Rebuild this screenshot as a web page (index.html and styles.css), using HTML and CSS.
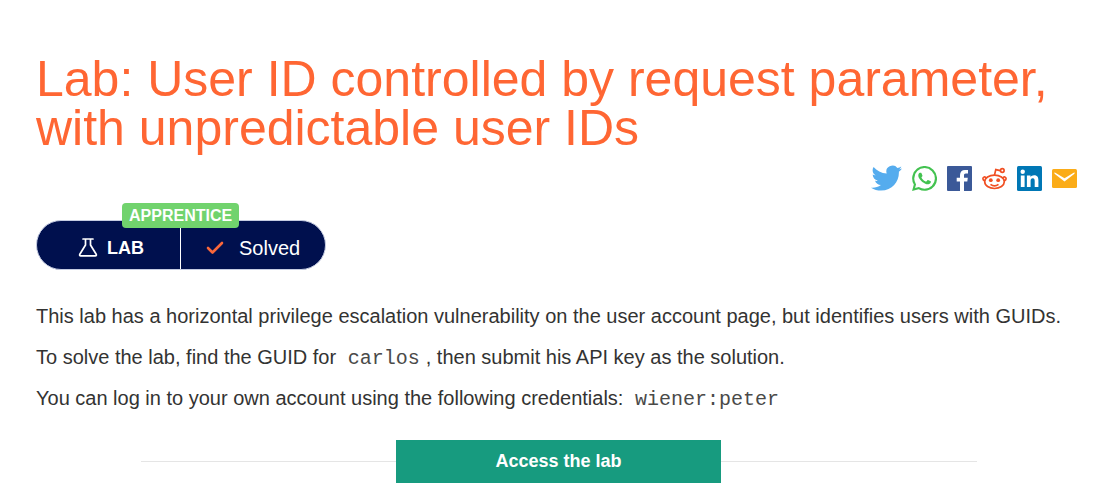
FILE: index.html
```html
<!DOCTYPE html>
<html lang="en">
<head>
<meta charset="utf-8">
<meta name="viewport" content="width=device-width, initial-scale=1">
<title>Lab: User ID controlled by request parameter, with unpredictable user IDs</title>
<link rel="stylesheet" href="styles.css">
</head>
<body>
<main class="page">
  <h1 class="title">Lab: User ID controlled by request parameter, with unpredictable user IDs</h1>
  <nav class="share" aria-label="Share">
    <a class="share-link" href="#twitter" aria-label="Twitter"><svg width="31" height="26" viewBox="0 0 30 26" preserveAspectRatio="none"><path fill="#55acee" d="M30 3.4c-1 .5-1.900.8-3.100 1 1.200-.7 2-1.700 2.400-3-1.100.7-2.400 1.200-3.700 1.500A6 6 0 0 0 15.200 8.500C10 8.200 5.600 5.800 2.500 2 .7 5 1.600 8.600 4.400 10.400c-1 0-2-.3-2.800-.8.100 3 2 5.400 5 6.100-.9.200-1.800.3-2.700.1.800 2.500 3 4.200 5.700 4.300C6.800 22.300 3.500 23 0 22.700 3 24.700 6.300 25.600 9.700 25.600c11.200 0 17.700-9.400 17.300-18.900 1.200-.9 2.200-2 3-3.300z"/></svg></a>
    <a class="share-link" href="#whatsapp" aria-label="WhatsApp"><svg width="25" height="25" viewBox="0 0 24 24"><path fill="#43c250" d="M17.500 14.400c-.3-.15-1.760-.87-2.030-.97-.27-.1-.47-.15-.67.15-.2.300-.77.970-.94 1.170-.17.190-.35.220-.65.070-.300-.15-1.250-.46-2.390-1.480-.88-.79-1.480-1.760-1.650-2.060-.17-.3-.02-.46.130-.61.130-.13.300-.35.450-.52.150-.17.200-.3.300-.5.100-.2.050-.37-.03-.52-.08-.15-.67-1.610-.92-2.210-.24-.58-.49-.5-.67-.51h-.57c-.2 0-.52.070-.79.370-.27.300-1.040 1.020-1.040 2.480s1.060 2.880 1.210 3.070c.15.200 2.100 3.200 5.080 4.490.71.300 1.260.49 1.690.62.710.23 1.360.2 1.870.12.570-.09 1.760-.72 2.010-1.410.25-.69.250-1.290.17-1.410-.07-.12-.27-.2-.56-.35M12.050 21.800a9.900 9.900 0 0 1-5.030-1.380l-.36-.21-3.740.98 1-3.650-.24-.37A9.860 9.860 0 0 1 2.170 11.900 9.890 9.890 0 1 1 12.050 21.800M20.500 3.500A11.900 11.900 0 0 0 1.750 17.840L.060 24l6.300-1.650A11.890 11.890 0 0 0 20.500 3.500"/></svg></a>
    <a class="share-link" href="#facebook" aria-label="Facebook"><svg width="25" height="25" viewBox="0 0 25 25"><rect width="25" height="25" rx="1" fill="#3b5998"/><path fill="#fff" d="M13 25v-9.500H9.700v-3.700H13V9c0-3.300 2-5.100 5-5.100 1.400 0 2.600.1 3 .15v3.450h-2.100c-1.600 0-1.900.8-1.900 1.900v2.400h3.800l-.5 3.700H17V25z"/></svg></a>
    <a class="share-link" href="#reddit" aria-label="Reddit"><svg width="25" height="25" viewBox="0 0 25 25" fill="none" stroke="#f04f23" stroke-width="1.700"><ellipse cx="12.500" cy="15.800" rx="9.800" ry="6.700"/><path d="M12.500 9.100l1.300-5.500 4.500 1M4.300 12.100C3 10 .9 10.900.9 12.800c0 1.200.8 1.800 1.900 2.100M20.700 12.100c1.300-2.100 3.400-1.200 3.400.7 0 1.200-.8 1.800-1.900 2.100M8.500 18.400c2.300 1.800 5.700 1.800 8 0"/><circle cx="20.300" cy="4.500" r="1.800"/><g fill="#f04f23" stroke="none"><circle cx="8.800" cy="14.200" r="1.900"/><circle cx="16.200" cy="14.200" r="1.900"/></g></svg></a>
    <a class="share-link" href="#linkedin" aria-label="LinkedIn"><svg width="25" height="25" viewBox="0 0 25 25"><rect width="25" height="25" rx="1.500" fill="#0077b5"/><g fill="#fff"><circle cx="5.700" cy="5.700" r="2.200"/><path d="M3.800 9.500h3.800V21H3.800zM9.900 9.500h3.600v1.600c.7-1.200 2-1.900 3.600-1.900 3.600 0 4.300 2.300 4.300 5.400V21h-3.700v-5.700c0-1.400-.1-3-1.900-3-1.900 0-2.200 1.400-2.200 2.900V21H9.900z"/></g></svg></a>
    <a class="share-link" href="#email" aria-label="Email"><svg width="25" height="25" viewBox="0 0 25 25"><rect y="3" width="25" height="19" rx="1.500" fill="#fbac18"/><path d="M2.500 6.200l10 6 10-6v1.600l-10 7.600-10-7.600z" fill="#fff"/></svg></a>
  </nav>
  <div class="status">
    <span class="level">APPRENTICE</span>
    <div class="status-part status-lab"><svg width="20" height="20" viewBox="0 0 20 20" fill="none" stroke="#fff" stroke-width="1.700" stroke-linejoin="round" stroke-linecap="round"><path d="M5 1h10M7.500 1v6L1.800 16.300q-.6 1.500 1 1.500h14.400q1.600 0 1-1.500L12.500 7V1"/></svg><span>LAB</span></div>
    <div class="status-part status-solved"><svg width="18" height="14" viewBox="0 0 18 14" fill="none" stroke="#f9673b" stroke-width="2.600" stroke-linecap="round" stroke-linejoin="round"><path d="M2 7l4.500 4.500L16 2"/></svg><span>Solved</span></div>
  </div>
  <div class="description">
    <p>This lab has a horizontal privilege escalation vulnerability on the user account page, but identifies users with GUIDs.</p>
    <p>To solve the lab, find the GUID for <code>carlos</code>, then submit his API key as the solution.</p>
    <p>You can log in to your own account using the following credentials: <code>wiener:peter</code></p>
  </div>
  <div class="access">
    <a class="access-button" href="#lab">Access the lab</a>
  </div>
</main>
</body>
</html>
```
FILE: styles.css
```css
* {
  box-sizing: border-box;
}

body {
  margin: 0;
  background: #fff;
  color: #333332;
  font: 20px/24px "Liberation Sans", Arial, sans-serif;
}

.page {
  padding: 55px 26px 0 36px;
}

.title {
  margin: 0;
  color: #ff6633;
  font-size: 50px;
  font-weight: 400;
  line-height: 49px;
}

.share {
  display: flex;
  justify-content: flex-end;
  align-items: center;
  gap: 10px;
  margin: 12px 4px 0 0;
}

.share-link,
.share-link svg {
  display: block;
}

.status {
  position: relative;
  display: grid;
  grid-template-columns: 1fr 1fr;
  width: 290px;
  height: 50px;
  margin-top: 29px;
  border: 1px solid #c5cce2;
  border-radius: 25px;
  background: #00104e;
  color: #fff;
}

.level {
  position: absolute;
  top: -18px;
  left: 50%;
  margin-left: -59px;
  padding: 0 7px;
  border-radius: 4px;
  background: #71d36d;
  font-size: 16px;
  font-weight: 700;
  line-height: 25px;
}

.status-part {
  display: flex;
  align-items: center;
  padding-top: 5px;
}

.status-lab {
  gap: 9px;
  padding-left: 41px;
  border-right: 1px solid #fff;
  font-size: 18px;
  font-weight: 700;
}

.status-solved {
  gap: 15px;
  padding-left: 25px;
}

.description {
  margin-top: 34px;
}

.description p {
  margin: 0 0 17px;
}

.description code {
  padding: 0 6px;
  color: #4a4a49;
  font: 20px/20px "Liberation Mono", "Courier New", monospace;
}

.access {
  display: flex;
  align-items: center;
  width: 80%;
  margin: 30px auto 0;
}

.access::before,
.access::after {
  content: "";
  flex: 1;
  height: 1px;
  background: #e5e5e5;
}

.access-button {
  padding: 0 99px;
  background: #179b7f;
  color: #fff;
  font-size: 18px;
  font-weight: 700;
  line-height: 43px;
  text-decoration: none;
}
```
